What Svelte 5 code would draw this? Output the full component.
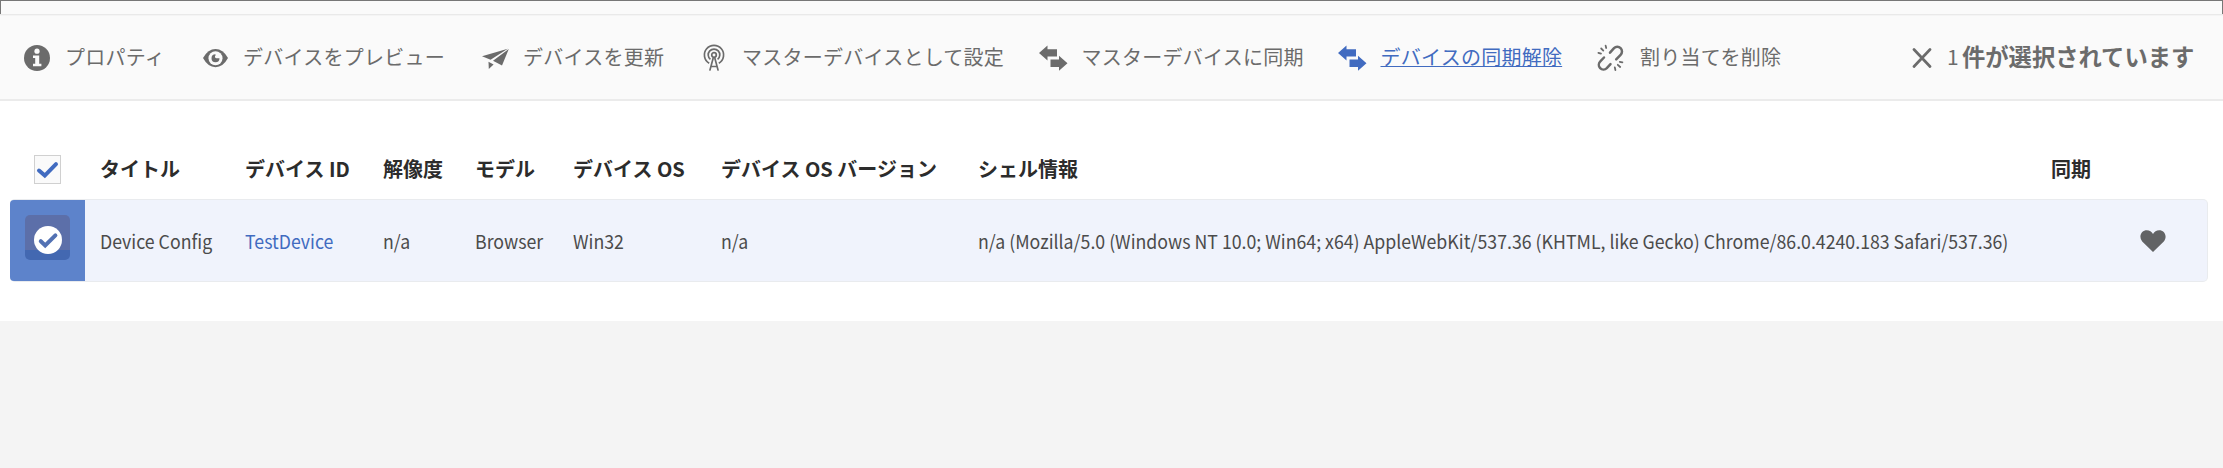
<script>
  const actions = [
    { icon: 'info', label: 'プロパティ' },
    { icon: 'eye', label: 'デバイスをプレビュー' },
    { icon: 'send', label: 'デバイスを更新' },
    { icon: 'beacon', label: 'マスターデバイスとして設定' },
    { icon: 'swap', label: 'マスターデバイスに同期' },
    { icon: 'swap', label: 'デバイスの同期解除', active: true },
    { icon: 'unlink', label: '割り当てを削除' }
  ];
  const headers = ['タイトル', 'デバイス ID', '解像度', 'モデル', 'デバイス OS', 'デバイス OS バージョン', 'シェル情報', '同期'];
  const agent = 'n/a (Mozilla/5.0 (Windows NT 10.0; Win64; x64) AppleWebKit/537.36 (KHTML, like Gecko) Chrome/86.0.4240.183 Safari/537.36)';
  const cells = ['Device Config', 'TestDevice', 'n/a', 'Browser', 'Win32', 'n/a', agent];
</script>

<main>
  <div class="strip"></div>
  <nav>
    {#each actions as a}
      <div class="action {a.icon}" class:active={a.active}>
        <svg class="icon" viewBox="0 0 28 28">
          {#if a.icon === 'info'}
            <circle cx="13" cy="14" r="13" fill="currentColor" />
            <circle cx="13" cy="7.2" r="2.6" fill="#fafafa" />
            <path d="M9 11.5h6.2v8.2h2.2v2.6H9v-2.6h2.2v-5.6H9z" fill="#fafafa" />
          {:else if a.icon === 'eye'}
            <path d="M1 14Q6 5 13.5 5T26 14Q21 23.2 13.5 23.2T1 14Z" fill="currentColor" />
            <circle cx="13.5" cy="14.2" r="7" fill="#fafafa" />
            <path d="M13.5 10.2a4 4 0 1 0 4 4h-3a1.6 1.6 0 0 1-1-2.8z" fill="currentColor" />
          {:else if a.icon === 'send'}
            <path d="M0 12.2 25.8 4.8 8.6 15.7Z M11 16.8 26.8 5 20 21.4Z M6.5 17.8 11.6 20.6 6.8 25Z" fill="currentColor" />
          {:else if a.icon === 'beacon'}
            <g fill="none" stroke="currentColor" stroke-width="1.7">
              <path d="M6.2 19.3A9.6 9.6 0 1 1 15.8 19.3" />
              <path d="M7.4 15.4A5.8 5.8 0 1 1 14.6 15.4" />
              <circle cx="11" cy="11" r="2.3" />
              <path d="M10.2 14 6.8 26.6M11.8 14 15.2 26.6M8 22.5h6" />
            </g>
          {:else if a.icon === 'swap'}
            <path d="M0 9 8.5 1.5V5.2H18V12.6H8.5V16.5Z M28.5 19.2 20 11.8V15.6H11.5V23H20V26.7Z" fill="currentColor" />
          {:else}
            <g fill="none" stroke="currentColor" stroke-width="2.5" stroke-linecap="round">
              <path d="M13 8.7 17 4.2A4.6 4.6 0 0 1 23.6 10.8L19.2 15.4" />
              <path d="M7 13.5 3.3 17.4A4.6 4.6 0 0 0 9.8 24.2L13.5 20.2" />
              <path d="M1.4 8.8 4 9.6M4.2 4.5 6.3 6.6M8.6 1.6 9.2 4M25.4 18.4 22.8 17.8M23.2 23 20.8 20.8M18.4 26 17.8 23.4" stroke-width="1.8" />
            </g>
          {/if}
        </svg>
        <span>{a.label}</span>
      </div>
    {/each}
    <div class="selection">
      <svg viewBox="0 0 20 20"><path d="M2 1.5 18 18.5M18 1.5 2 18.5" stroke="currentColor" stroke-width="2.7" stroke-linecap="round" /></svg>
      <span class="count">1</span><b>件が選択されています</b>
    </div>
  </nav>

  <section>
    <div class="grid head">
      <div class="select">
        <div class="checkbox">
          <svg viewBox="0 0 25 27"><path d="M4 14.6 9.8 19.6 21 8.2" fill="none" stroke="#416bc0" stroke-width="4" stroke-linecap="round" /></svg>
        </div>
      </div>
      {#each headers as h}<div>{h}</div>{/each}
    </div>
    <div class="grid row">
      <div class="mark">
        <div class="thumb">
          <svg viewBox="0 0 28 28"><circle cx="14" cy="14" r="14" fill="#fff" /><path d="M6.8 15.2 11.2 19.4 21.4 9.4" fill="none" stroke="#5271b3" stroke-width="4" stroke-linecap="round" /></svg>
        </div>
      </div>
      {#each cells as c, i}<div class="cell" class:link={i === 1}>{c}</div>{/each}
      <div class="heart">
        <svg viewBox="0 0 26 22" preserveAspectRatio="none"><path d="M13 22 2.2 11.4A6.8 6.8 0 0 1 .4 6.8C.4 3 3.3.3 6.8.3 9.5.3 11.8 1.7 13 4 14.2 1.7 16.5.3 19.2.3c3.5 0 6.4 2.7 6.4 6.5 0 1.8-.7 3.4-1.8 4.6Z" fill="#626365" /></svg>
      </div>
    </div>
  </section>
</main>

<style>
  :global(body) { margin: 0; background: #f4f4f4; }
  main { width: 2223px; height: 468px; overflow: hidden; background: #f4f4f4; font-family: "Noto Sans CJK JP", sans-serif; font-size: 20px; white-space: nowrap; }
  main, main * { box-sizing: border-box; }
  svg { display: block; flex: none; }
  .strip { height: 14px; background: #fafafa; border: 1px solid #777; border-bottom: 0; }
  nav { height: 87px; background: #fafafa; border-top: 1px solid #e9e9e9; border-bottom: 2px solid #ebebeb; padding: 0 0 2px 24px; display: grid; grid-template-columns: 178px 280px 221px 336px 299px 259px 315px 1fr; align-items: center; color: #6b6b6b; box-shadow: inset 0 1px #f4f4f4; }
  .action { display: flex; align-items: center; font-weight: 400; letter-spacing: .25px; }
  .icon { width: 28px; height: 28px; margin: 3px 13px 0 0; overflow: visible; }
  .beacon .icon { margin-right: 11px; }
  .swap .icon { margin-right: 14.5px; }
  .unlink .icon { margin-right: 15px; }
  .active { color: #416bc0; }
  .active span { text-decoration: underline; text-decoration-thickness: 1px; text-underline-offset: 1px; }
  .selection { display: flex; align-items: center; font-size: 23.3px; }
  .selection svg { width: 20px; height: 20px; margin: 3px 15px 0 0; }
  .count { width: 15px; font-size: 21px; }
  section { height: 220px; background: #fff; padding: 38px 15px 0 10px; }
  .grid { display: grid; grid-template-columns: 90px 145px 138px 92px 98px 148px 257px 1073px 1fr; align-items: center; }
  .head { height: 60px; font-weight: 700; color: #2c2c2c; line-height: 60px; }
  .select { padding-left: 24px; }
  .checkbox { width: 27px; height: 29px; border: 1px solid #d0d0d0; background: #fafafa; }
  .row { height: 83px; background: #f0f3fc; border: 1px solid #e9ebee; border-left: 0; border-radius: 5px; color: #4b4b4b; }
  .cell { font-size: 19px; transform: scaleX(.933); transform-origin: 0 50%; }
  .mark { width: 75px; height: 81px; background: #5d83cb; border-radius: 4px 0 0 4px; display: grid; place-items: center; padding-bottom: 6px; }
  .thumb { width: 45px; height: 45px; border-radius: 5px; background: linear-gradient(#5c6fa9 0 78%, #4368b1 78%); display: grid; place-items: center; }
  .thumb svg { width: 28px; height: 28px; margin: 5px 0 0 1px; }
  .link { color: #416bc0; }
  .heart { padding-left: 89px; }
  .heart svg { width: 26px; height: 22px; }
</style>
